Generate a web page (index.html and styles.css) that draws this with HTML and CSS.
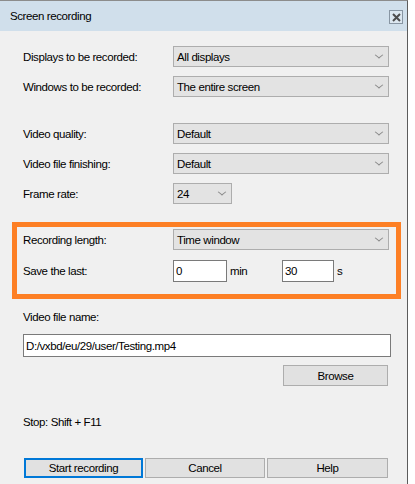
FILE: index.html
```html
<!DOCTYPE html>
<html lang="en">
<head>
  <title>Screen recording</title>
  <meta charset="utf-8">
  <meta name="viewport" content="width=device-width, initial-scale=1">
  <link rel="stylesheet" href="styles.css">
</head>
<body>
  <div class="window">
    <div class="titlebar">
      <span class="titlebar__title">Screen recording</span>
      <button class="titlebar__close" aria-label="Close">
        <svg width="9" height="9" viewBox="0 0 9 9">
          <path d="M1 1 L8 8 M8 1 L1 8" stroke="#4d4d4d" stroke-width="2"/>
        </svg>
      </button>
    </div>

    <div class="content">
      <div class="row row--first">
        <span class="row__label">Displays to be recorded:</span>
        <div class="select">All displays</div>
      </div>
      <div class="row row--near">
        <span class="row__label">Windows to be recorded:</span>
        <div class="select">The entire screen</div>
      </div>

      <div class="row row--far">
        <span class="row__label">Video quality:</span>
        <div class="select">Default</div>
      </div>
      <div class="row row--near">
        <span class="row__label">Video file finishing:</span>
        <div class="select">Default</div>
      </div>
      <div class="row row--near">
        <span class="row__label">Frame rate:</span>
        <div class="select select--small">24</div>
      </div>

      <div class="highlight">
        <div class="row">
          <span class="row__label">Recording length:</span>
          <div class="select">Time window</div>
        </div>
        <div class="row row--near">
          <span class="row__label">Save the last:</span>
          <input class="field field--min" type="text" value="0">
          <span class="unit unit--min">min</span>
          <input class="field field--sec" type="text" value="30">
          <span class="unit">s</span>
        </div>
      </div>

      <p class="caption">Video file name:</p>
      <input class="field field--path" type="text" value="D:/vxbd/eu/29/user/Testing.mp4">
      <div class="browse">
        <button class="button button--browse">Browse</button>
      </div>

      <p class="hint">Stop: Shift + F11</p>

      <div class="actions">
        <button class="button button--default">Start recording</button>
        <button class="button">Cancel</button>
        <button class="button">Help</button>
      </div>
    </div>
  </div>
</body>
</html>
```

FILE: styles.css
```css
*, *::before, *::after {
  margin: 0;
  padding: 0;
  box-sizing: border-box;
}

html, body {
  height: 100%;
}

body {
  background-color: #ffffff;
  font-family: "Liberation Sans", Arial, sans-serif;
  font-size: 11.5px;
  letter-spacing: -0.4px;
  color: #000000;
}

.window {
  width: 408px;
  height: 100%;
  border-top: 1px solid #8c8c8c;
  border-right: 1px solid #5c5c5c;
  background-color: #f0f0f0;
}

.titlebar {
  display: flex;
  align-items: center;
  justify-content: space-between;
  height: 30px;
  padding: 0 4px 0 10px;
  background-color: #d0dfeb;
}

.titlebar__close {
  display: grid;
  place-items: center;
  width: 14px;
  height: 14px;
  margin-top: 2px;
  border: 1px solid #8896a3;
  background-color: #dce7f0;
}

.content {
  padding: 15px 18px 0 23px;
}

/* one label + control line */
.row {
  display: flex;
  align-items: center;
  height: 21px;
}

.row--near {
  margin-top: 9px;
}

.row--far {
  margin-top: 26px;
}

.row__label {
  flex: 0 0 150px;
}

.select {
  display: flex;
  align-items: center;
  flex: 1;
  height: 21px;
  padding-left: 3px;
  border: 1px solid #adadad;
  background-color: #e3e3e3;
  position: relative;
}

/* flat dropdown chevron */
.select::after {
  content: "";
  position: absolute;
  right: 6px;
  top: 5px;
  width: 6px;
  height: 6px;
  border-right: 1px solid #8a8a8a;
  border-bottom: 1px solid #8a8a8a;
  transform: scaleY(0.8) rotate(45deg);
}

.select--small {
  flex: 0 0 59px;
}

.highlight {
  margin: 18px -12px 0 -11px;
  padding: 2px 7px 12px 6px;
  border: 5px solid #fd7f24;
}

.highlight .row--near {
  height: 22px;
  margin-top: 10px;
}

.field {
  height: 22px;
  padding-left: 2px;
  border: 1px solid #7a7a7a;
  background-color: #ffffff;
  font: inherit;
  letter-spacing: inherit;
  color: #000000;
}

.field--min {
  width: 54px;
}

.field--sec {
  width: 52px;
}

.unit {
  padding-left: 3px;
}

.unit--min {
  width: 55px;
}

.caption {
  margin-top: 11px;
  line-height: 15px;
}

.field--path {
  display: block;
  width: 368px;
  height: 23px;
  margin-top: 9px;
}

.browse {
  display: flex;
  justify-content: flex-end;
  margin-top: 8px;
}

.button {
  height: 21px;
  border: 1px solid #adadad;
  background-color: #e1e1e1;
  font: inherit;
  letter-spacing: inherit;
  color: #000000;
}

.button--browse {
  width: 105px;
  margin-right: 1px;
}

.hint {
  margin-top: 29px;
  line-height: 15px;
}

.actions {
  display: grid;
  grid-template-columns: 119px 120px 121px;
  gap: 2px;
  margin-top: 28px;
  margin-left: 1px;
}

.actions .button {
  height: 20px;
}

.button--default {
  border: 2px solid #0078d7;
}
```
